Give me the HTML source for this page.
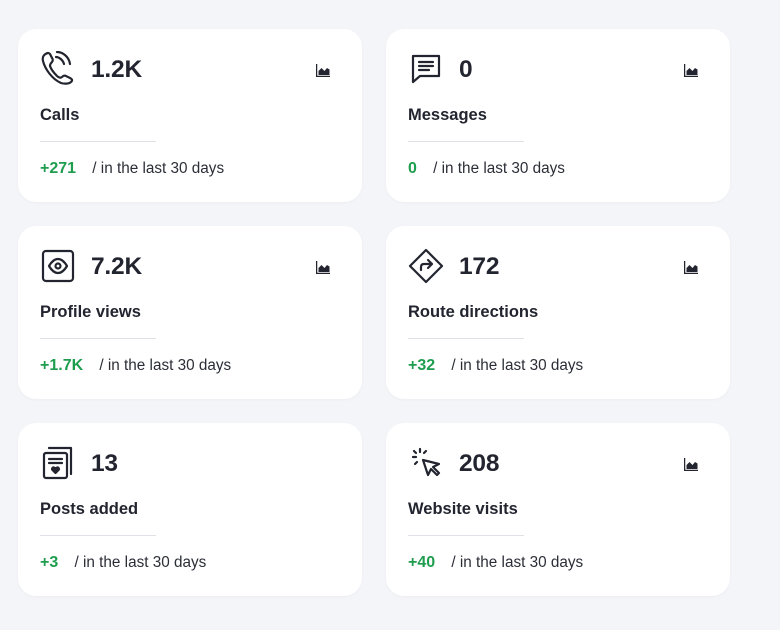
<!DOCTYPE html>
<html><head><style>
body{margin:0;width:780px;height:630px;background:#f4f5f9;font-family:"Liberation Sans",sans-serif;color:#22252f;position:relative;overflow:hidden}
.card{position:absolute;width:344px;height:173px;background:#fff;border-radius:18px;box-shadow:0 1px 3px rgba(0,0,0,.03)}
.ic{position:absolute;left:22px;top:22px;width:36px;height:36px}
.num{position:absolute;left:73px;top:27px;font-size:24.5px;font-weight:bold;letter-spacing:-.2px}
.ch{position:absolute;left:298px;top:35px}
.lab{position:absolute;left:22px;top:77px;font-size:16.5px;font-weight:bold}
.div{position:absolute;left:22px;top:112px;width:116px;height:1px;background:#dfe1e6}
.ft{position:absolute;left:22px;top:131px;font-size:15.3px;color:#2b2e37}
.ft b{color:#1f9d4f;margin-right:12px;font-size:16px}
</style></head><body>
<svg width="0" height="0" style="position:absolute"><defs><g id="chart"><path d="M0.5 0v12.5H14" stroke="#22252f" stroke-width="1.5" fill="none"/><path d="M2.5 11V7l3-3 3 3 2.5-3 2.5 1.5V11z" fill="#22252f"/></g></defs></svg>

<div class="card" style="left:18px;top:29px">
<svg class="ic" viewBox="0 0 36 36" fill="none" stroke="#22252f" stroke-width="2.2" stroke-linecap="round" stroke-linejoin="round"><path d="M8 2c-4 1-6 4-5 8 2 8 9 18 18 22 3 1 8 1 10-1 2-2 1-3-1-4l-4-2c-2-1-3 0-4 1-1 1-3 1-5-1-3-3-6-7-7-10 0-2 1-3 2-4 1-1 1-3 0-4L10 3C9 2 9 2 8 2z"/><path d="M16 6c3 0 7 3 8 7"/><path d="M17 1c6 0 12 5 13 12"/></svg>
<div class="num">1.2K</div><svg class="ch" width="14" height="13"><use href="#chart"/></svg>
<div class="lab">Calls</div><div class="div"></div><div class="ft"><b>+271</b> / in the last 30 days</div></div>

<div class="card" style="left:386px;top:29px">
<svg class="ic" viewBox="0 0 36 36" fill="none" stroke="#22252f" stroke-width="2.2" stroke-linecap="round" stroke-linejoin="round"><path d="M5 5h26v20H12l-7 6z"/><path d="M11 11h14M11 15h14M11 19h10"/></svg>
<div class="num">0</div><svg class="ch" width="14" height="13"><use href="#chart"/></svg>
<div class="lab">Messages</div><div class="div"></div><div class="ft"><b>0</b> / in the last 30 days</div></div>

<div class="card" style="left:18px;top:226px">
<svg class="ic" viewBox="0 0 36 36" fill="none" stroke="#22252f" stroke-width="2.2" stroke-linecap="round" stroke-linejoin="round"><rect x="3" y="3" width="30" height="30" rx="3"/><path d="M9 18c3-5 6-7 9-7s6 2 9 7c-3 5-6 7-9 7s-6-2-9-7z"/><circle cx="18" cy="18" r="2.5"/></svg>
<div class="num">7.2K</div><svg class="ch" width="14" height="13"><use href="#chart"/></svg>
<div class="lab">Profile views</div><div class="div"></div><div class="ft"><b>+1.7K</b> / in the last 30 days</div></div>

<div class="card" style="left:386px;top:226px">
<svg class="ic" viewBox="0 0 36 36" fill="none" stroke="#22252f" stroke-width="2.2" stroke-linecap="round" stroke-linejoin="round"><path d="M18 2l16 16-16 16L2 18z"/><path d="M13 22v-3c0-2 1-3 3-3h8M20 12l4 4-4 4"/></svg>
<div class="num">172</div><svg class="ch" width="14" height="13"><use href="#chart"/></svg>
<div class="lab">Route directions</div><div class="div"></div><div class="ft"><b>+32</b> / in the last 30 days</div></div>

<div class="card" style="left:18px;top:423px">
<svg class="ic" viewBox="0 0 36 36" fill="none" stroke="#22252f" stroke-width="2.2" stroke-linecap="round" stroke-linejoin="round"><path d="M9 3h22v26"/><rect x="4" y="8" width="23" height="25" rx="2"/><path d="M9 14h13M9 18h13"/><path d="M15.5 28l-3-3c-1-1 0-3 1.5-2.5l1.5 1 1.5-1c1.5-.5 2.5 1.5 1.5 2.5z" fill="#22252f"/></svg>
<div class="num">13</div>
<div class="lab">Posts added</div><div class="div"></div><div class="ft"><b>+3</b> / in the last 30 days</div></div>

<div class="card" style="left:386px;top:423px">
<svg class="ic" viewBox="0 0 36 36" fill="none" stroke="#22252f" stroke-width="2.2" stroke-linecap="round" stroke-linejoin="round"><path d="M15 15l5 15 3-6 6 6 2-2-6-6 6-3z"/><path d="M12 4v3M5 12h3M6 6l2 2M18 6l-2 2M7 19l2-2"/></svg>
<div class="num">208</div><svg class="ch" width="14" height="13"><use href="#chart"/></svg>
<div class="lab">Website visits</div><div class="div"></div><div class="ft"><b>+40</b> / in the last 30 days</div></div>
</body></html>
